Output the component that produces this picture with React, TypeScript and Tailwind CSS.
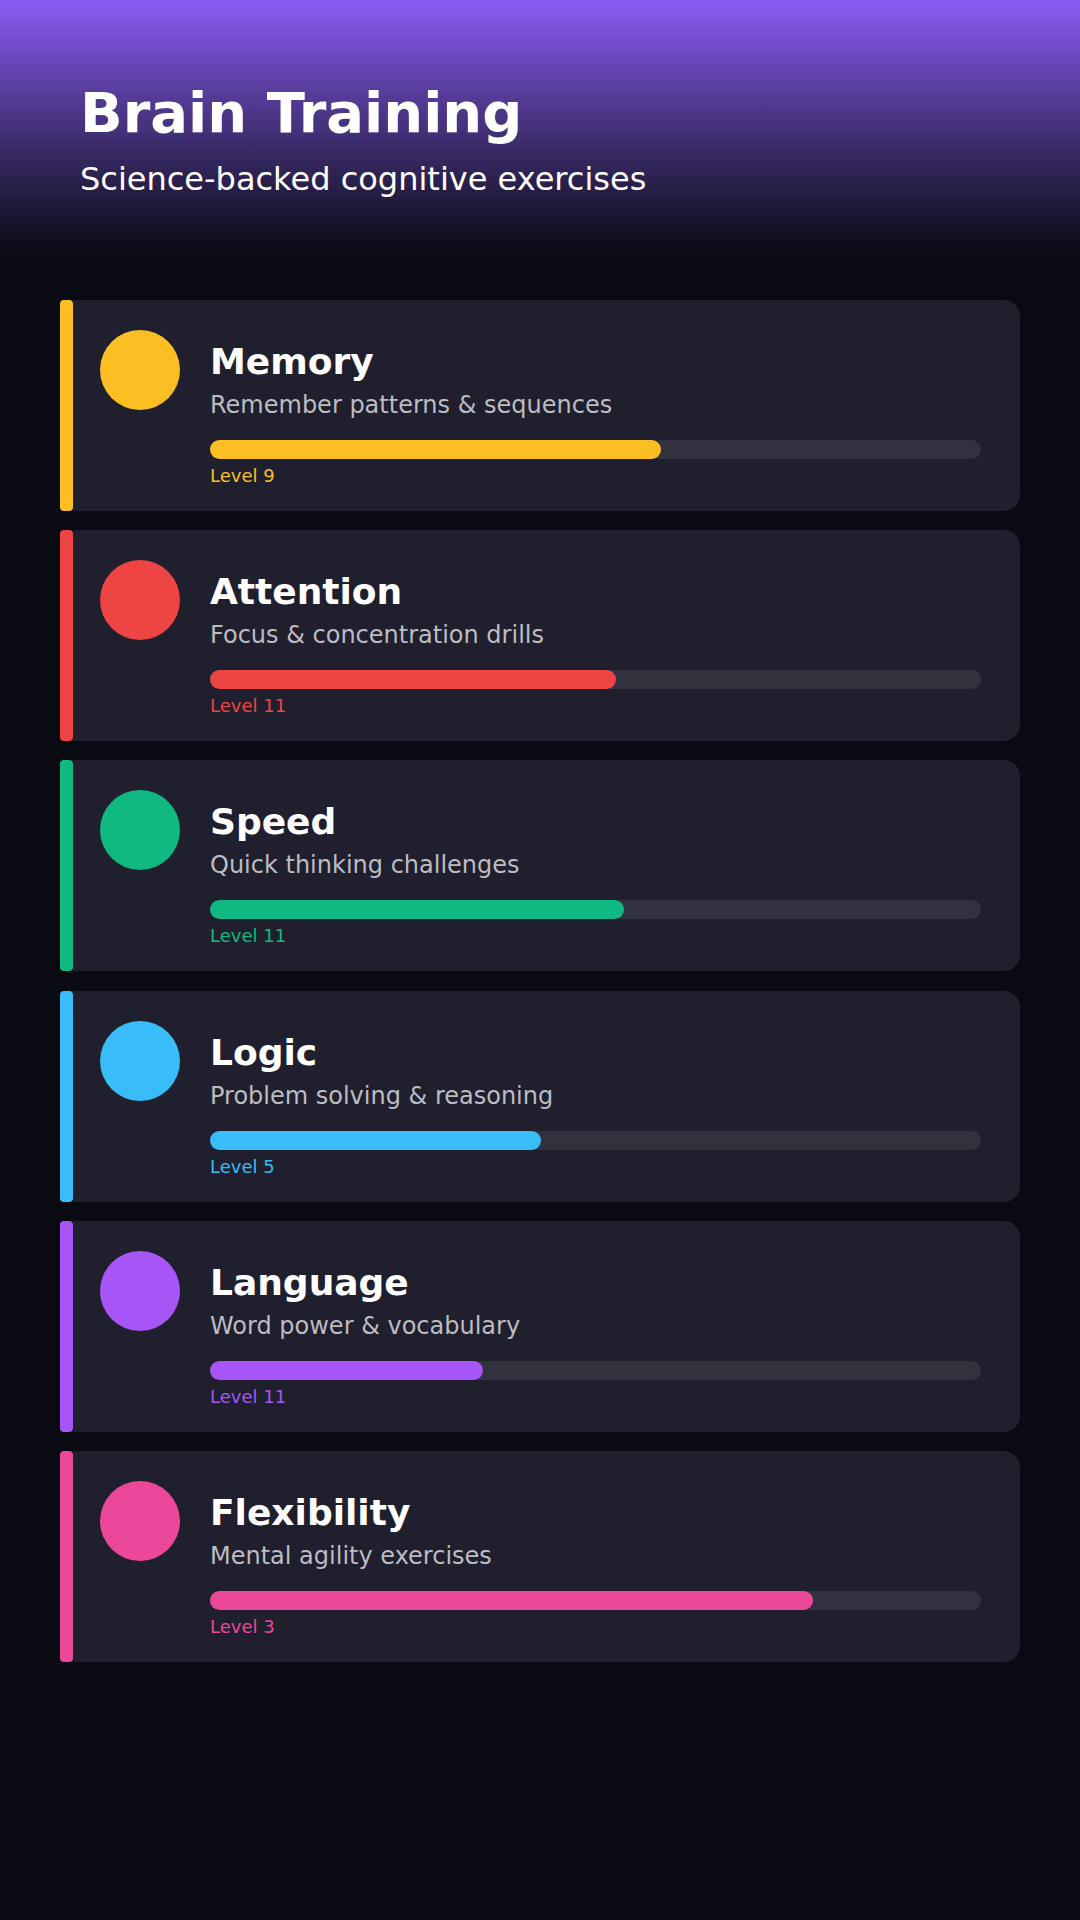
import React from "react";

type Skill = {
  name: string;
  desc: string;
  level: number;
  pct: number;
  color: string;
};

const skills: Skill[] = [
  { name: "Memory", desc: "Remember patterns & sequences", level: 9, pct: 58.5, color: "#fbbf24" },
  { name: "Attention", desc: "Focus & concentration drills", level: 11, pct: 52.7, color: "#ef4444" },
  { name: "Speed", desc: "Quick thinking challenges", level: 11, pct: 53.7, color: "#10b981" },
  { name: "Logic", desc: "Problem solving & reasoning", level: 5, pct: 42.9, color: "#38bdf8" },
  { name: "Language", desc: "Word power & vocabulary", level: 11, pct: 35.4, color: "#a855f7" },
  { name: "Flexibility", desc: "Mental agility exercises", level: 3, pct: 78.2, color: "#ec4899" },
];

function Card({ s }: { s: Skill }) {
  return (
    <div className="flex h-[211px]">
      <div className="w-[13px] shrink-0 rounded-[4px]" style={{ backgroundColor: s.color }} />
      <div className="flex flex-1 gap-[30px] rounded-r-2xl bg-[#1f1f2d] pl-[27px] pr-[39px] pt-[30px]">
        <div className="h-20 w-20 shrink-0 rounded-full" style={{ backgroundColor: s.color }} />
        <div className="flex flex-1 flex-col pt-[10px]">
          <div className="text-[36px] font-bold leading-[44px] text-white">{s.name}</div>
          <div className="mt-[5px] text-[24px] leading-[32px] text-[#bcbcc2]">{s.desc}</div>
          <div className="mt-[19px] h-[19px] w-full rounded-full bg-[#32323e]">
            <div className="h-full rounded-full" style={{ width: `${s.pct}%`, backgroundColor: s.color }} />
          </div>
          <div className="mt-[5px] text-[18px] leading-[24px]" style={{ color: s.color }}>
            Level {s.level}
          </div>
        </div>
      </div>
    </div>
  );
}

export default function App() {
  return (
    <div
      className="min-h-[1920px] w-[1080px] bg-[#0a0a13]"
      style={{ fontFamily: '"DejaVu Sans", Verdana, sans-serif' }}
    >
      <div className="h-[256px] bg-gradient-to-b from-[#8b5cf6] to-[#0a0a13] px-[80px] pt-[79px]">
        <h1 className="text-[56px] font-bold leading-[68px] text-white">Brain Training</h1>
        <p className="mt-[13px] text-[32px] leading-[38px] text-white">Science-backed cognitive exercises</p>
      </div>
      <div className="flex flex-col gap-[19.2px] px-[60px] pt-[44px]">
        {skills.map((s) => (
          <Card key={s.name} s={s} />
        ))}
      </div>
    </div>
  );
}
